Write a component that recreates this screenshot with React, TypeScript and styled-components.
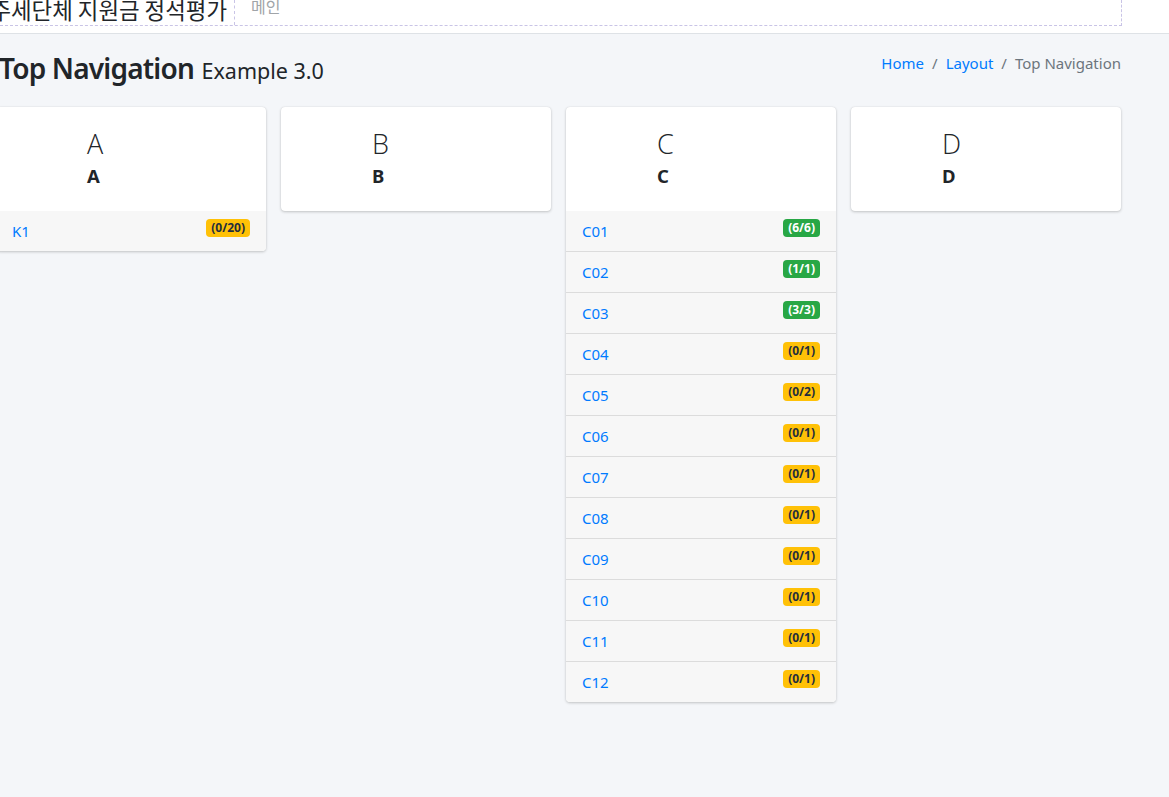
import React from "react";
import styled, { createGlobalStyle } from "styled-components";

const Global = createGlobalStyle`
  html, body { margin: 0; padding: 0; }
  body {
    background: #f4f6f9;
    font-family: "Noto Sans", "Noto Sans CJK KR", sans-serif;
    color: #212529;
    overflow: hidden;
  }
  * { box-sizing: border-box; }
`;

const Page = styled.div`
  width: 1169px;
  height: 797px;
  background: #f4f6f9;
  overflow: hidden;
`;

const TopBar = styled.header`
  height: 34px;
  background: #fff;
  border-bottom: 1px solid #dee2e6;
`;

const DashedFrame = styled.div`
  width: 1122px;
  height: 26px;
  border-bottom: 1px dashed #c9c4e6;
  border-right: 1px dashed #c9c4e6;
  display: flex;
  align-items: stretch;
`;

const Brand = styled.div`
  margin-left: -11px;
  width: 246px;
  flex: none;
  padding-right: 7px;
  display: flex;
  justify-content: flex-end;
  font-size: 22.4px;
  line-height: 18px;
  color: #212529;
  border-right: 1px dashed #c9c4e6;
  white-space: nowrap;
  font-family: "Noto Sans CJK KR", sans-serif;
`;

const MenuItem = styled.div`
  padding-left: 16px;
  font-size: 16px;
  line-height: 12px;
  color: #a0a4a8;
  font-family: "Noto Sans CJK KR", sans-serif;
  overflow: hidden;
`;

const Content = styled.main`
  margin-left: -4px;
  width: 1125px;
`;

const HeaderRow = styled.div`
  display: flex;
  justify-content: space-between;
  align-items: flex-start;
  height: 73px;
  padding-top: 14px;
`;

const Title = styled.h1`
  margin: 0 0 0 3px;
  font-size: 28px;
  font-weight: 600;
  letter-spacing: -0.8px;
  line-height: 40px;
  white-space: nowrap;
`;

const Small = styled.small`
  font-size: 21.5px;
  font-weight: 400;
  letter-spacing: 0;
  margin-left: 1px;
`;

const Crumbs = styled.ol`
  list-style: none;
  margin: 0;
  padding: 4px 0 0 0;
  display: flex;
  font-size: 15px;
  line-height: 22px;
  color: #6c757d;
  & > li + li::before {
    content: "/";
    color: #6c757d;
    padding: 0 8px;
  }
`;

const Crumb = styled.li<{ $link?: boolean }>`
  color: ${(p) => (p.$link ? "#007bff" : "#6c757d")};
`;

const Grid = styled.div`
  display: grid;
  grid-template-columns: repeat(4, 270px);
  column-gap: 15px;
  align-items: start;
`;

const Card = styled.section`
  background: #fff;
  border-radius: 4px;
  box-shadow: 0 0 1px rgba(0, 0, 0, 0.125), 0 1px 3px rgba(0, 0, 0, 0.2);
  overflow: hidden;
`;

const CardHead = styled.div`
  height: 104px;
  padding: 22px 0 0 91px;
`;

const BigLetter = styled.div`
  font-size: 27px;
  font-weight: 300;
  line-height: 30px;
  color: #212529;
  font-family: "Open Sans", sans-serif;
`;

const BoldLetter = styled.div`
  font-size: 18.5px;
  font-weight: 700;
  line-height: 26px;
  margin-top: 4px;
`;

const List = styled.ul`
  list-style: none;
  margin: 0;
  padding: 0;
`;

const Item = styled.li`
  box-sizing: content-box;
  height: 40px;
  background: #f7f7f7;
  display: flex;
  justify-content: space-between;
  align-items: flex-start;
  padding: 0 16px;
  & + & {
    border-top: 1px solid #dcdcdc;
  }
`;

const ItemLink = styled.a`
  color: #007bff;
  text-decoration: none;
  font-size: 15px;
  line-height: 20px;
  margin-top: 10px;
`;

const Badge = styled.span<{ $ok?: boolean }>`
  margin-top: 8px;
  font-size: 12px;
  font-weight: 700;
  line-height: 12px;
  padding: 3px 5px;
  border-radius: 4px;
  background: ${(p) => (p.$ok ? "#28a745" : "#ffc107")};
  color: ${(p) => (p.$ok ? "#fff" : "#1f2d3d")};
`;

type Row = { name: string; badge: string; ok?: boolean };

const columns: { letter: string; rows: Row[] }[] = [
  { letter: "A", rows: [{ name: "K1", badge: "(0/20)" }] },
  { letter: "B", rows: [] },
  {
    letter: "C",
    rows: [
      { name: "C01", badge: "(6/6)", ok: true },
      { name: "C02", badge: "(1/1)", ok: true },
      { name: "C03", badge: "(3/3)", ok: true },
      { name: "C04", badge: "(0/1)" },
      { name: "C05", badge: "(0/2)" },
      { name: "C06", badge: "(0/1)" },
      { name: "C07", badge: "(0/1)" },
      { name: "C08", badge: "(0/1)" },
      { name: "C09", badge: "(0/1)" },
      { name: "C10", badge: "(0/1)" },
      { name: "C11", badge: "(0/1)" },
      { name: "C12", badge: "(0/1)" },
    ],
  },
  { letter: "D", rows: [] },
];

export default function App() {
  return (
    <Page>
      <Global />
      <TopBar>
        <DashedFrame>
          <Brand>주세단체 지원금 정석평가</Brand>
          <MenuItem>메인</MenuItem>
        </DashedFrame>
      </TopBar>
      <Content>
        <HeaderRow>
          <Title>
            Top Navigation <Small>Example 3.0</Small>
          </Title>
          <Crumbs>
            <Crumb $link>Home</Crumb>
            <Crumb $link>Layout</Crumb>
            <Crumb>Top Navigation</Crumb>
          </Crumbs>
        </HeaderRow>
        <Grid>
          {columns.map((c) => (
            <Card key={c.letter}>
              <CardHead>
                <BigLetter>{c.letter}</BigLetter>
                <BoldLetter>{c.letter}</BoldLetter>
              </CardHead>
              {c.rows.length > 0 && (
                <List>
                  {c.rows.map((r) => (
                    <Item key={r.name}>
                      <ItemLink href="#">{r.name}</ItemLink>
                      <Badge $ok={r.ok}>{r.badge}</Badge>
                    </Item>
                  ))}
                </List>
              )}
            </Card>
          ))}
        </Grid>
      </Content>
    </Page>
  );
}
